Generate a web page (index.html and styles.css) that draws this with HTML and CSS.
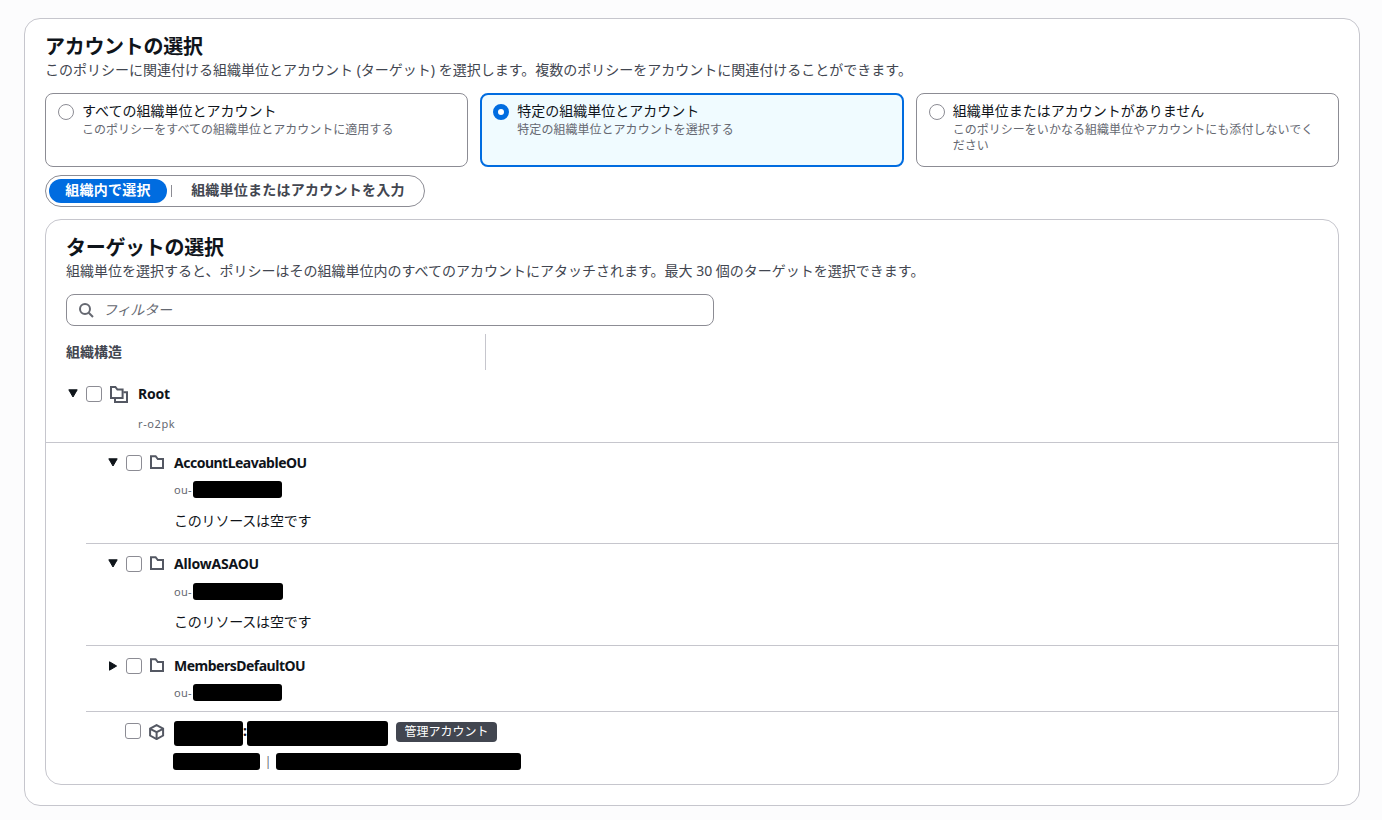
FILE: index.html
```html
<!DOCTYPE html>
<html lang="ja">
<head>
    <meta charset="UTF-8">
    <meta name="viewport" content="width=device-width, initial-scale=1.0">
    <title>アカウントの選択</title>
    <link rel="stylesheet" href="styles.css">
</head>
<body>
    <div class="container">
        <h2>アカウントの選択</h2>
        <p class="description">このポリシーに関連付ける組織単位とアカウント (ターゲット) を選択します。複数のポリシーをアカウントに関連付けることができます。</p>

        <div class="tiles">
            <label class="tile">
                <input type="radio" name="target">
                <span class="tile-text">
                    <span class="tile-label">すべての組織単位とアカウント</span>
                    <span class="tile-description">このポリシーをすべての組織単位とアカウントに適用する</span>
                </span>
            </label>
            <label class="tile selected">
                <input type="radio" name="target" checked>
                <span class="tile-text">
                    <span class="tile-label">特定の組織単位とアカウント</span>
                    <span class="tile-description">特定の組織単位とアカウントを選択する</span>
                </span>
            </label>
            <label class="tile">
                <input type="radio" name="target">
                <span class="tile-text">
                    <span class="tile-label">組織単位またはアカウントがありません</span>
                    <span class="tile-description">このポリシーをいかなる組織単位やアカウントにも添付しないでください</span>
                </span>
            </label>
        </div>

        <div class="segments">
            <button class="segment active">組織内で選択</button>
            <span class="segment-divider"></span>
            <button class="segment">組織単位またはアカウントを入力</button>
        </div>

        <div class="targets">
            <div class="targets-header">
                <h2>ターゲットの選択</h2>
                <p class="description">組織単位を選択すると、ポリシーはその組織単位内のすべてのアカウントにアタッチされます。最大 30 個のターゲットを選択できます。</p>
                <div class="filter">
                    <svg width="16" height="16" viewBox="0 0 16 16"><circle cx="7" cy="7" r="5"/><path d="M10.7 10.7 15 15"/></svg>
                    <input type="text" placeholder="フィルター">
                </div>
            </div>
            <div class="column-header">組織構造</div>

            <div class="node root">
                <div class="node-line">
                    <svg class="toggle" width="10" height="9" viewBox="0 0 10 9"><path d="M0.8 0.8h8.4L5 8z"/></svg>
                    <input type="checkbox">
                    <svg class="icon" width="20" height="18" viewBox="0 0 20 18"><path d="M1 2h4.4l2 2.6h5.2V13H1z"/><path d="M13.4 7.2H17V17H5V13.6"/></svg>
                    <span class="node-name">Root</span>
                </div>
                <div class="node-id">r-o2pk</div>
            </div>

            <div class="children">
                <div class="node">
                    <div class="node-line">
                        <svg class="toggle" width="10" height="9" viewBox="0 0 10 9"><path d="M0.8 0.8h8.4L5 8z"/></svg>
                        <input type="checkbox">
                        <svg class="icon" width="16" height="16" viewBox="0 0 16 16"><path d="M1 1.2h4.6l2.2 2.8H13V13H1z"/></svg>
                        <span class="node-name long">AccountLeavableOU</span>
                    </div>
                    <div class="node-id">ou-<span class="mask mask-ou"></span></div>
                    <div class="node-empty">このリソースは空です</div>
                </div>
                <div class="node wide">
                    <div class="node-line">
                        <svg class="toggle" width="10" height="9" viewBox="0 0 10 9"><path d="M0.8 0.8h8.4L5 8z"/></svg>
                        <input type="checkbox">
                        <svg class="icon" width="16" height="16" viewBox="0 0 16 16"><path d="M1 1.2h4.6l2.2 2.8H13V13H1z"/></svg>
                        <span class="node-name">AllowASAOU</span>
                    </div>
                    <div class="node-id">ou-<span class="mask mask-ou"></span></div>
                    <div class="node-empty">このリソースは空です</div>
                </div>
                <div class="node closed">
                    <div class="node-line">
                        <svg class="toggle" width="10" height="10" viewBox="0 0 10 10"><path d="M1.5 0.8v8.4L8.6 5z"/></svg>
                        <input type="checkbox">
                        <svg class="icon" width="16" height="16" viewBox="0 0 16 16"><path d="M1 1.2h4.6l2.2 2.8H13V13H1z"/></svg>
                        <span class="node-name long">MembersDefaultOU</span>
                    </div>
                    <div class="node-id">ou-<span class="mask mask-ou"></span></div>
                </div>
                <div class="account">
                    <div class="account-line">
                        <input type="checkbox">
                        <svg class="icon" width="16" height="16" viewBox="0 0 16 16"><path d="M7.6 1.1l6.5 3.5v6.9l-6.5 3.6-6.5-3.6V4.6z"/><path d="M1.1 4.8l6.5 3.3 6.5-3.3M7.6 8.1v7"/></svg>
                        <span class="account-name"><span class="mask mask-name"></span><span class="colon">:</span><span class="mask mask-label"></span></span>
                        <span class="badge">管理アカウント</span>
                    </div>
                    <div class="account-info"><span class="mask mask-id"></span><span class="bar">|</span><span class="mask mask-mail"></span></div>
                </div>
            </div>
        </div>
    </div>
</body>
</html>
```

FILE: styles.css
```css
* { box-sizing: border-box; }
body { font-family: "Noto Sans", "Noto Sans CJK JP", sans-serif; font-size: 14px; line-height: 20px; color: #0f141a; background-color: #fcfcfd; margin: 0; padding: 18px 22px 14px 24px; }
h2 { font-size: 20px; line-height: 24px; font-weight: 700; letter-spacing: -0.3px; margin: 0; }
.container { height: 788px; padding: 16px 20px 0; border: 1px solid #c6c6cd; border-radius: 16px; background-color: white; }
.description { margin: 1px 0 0; color: #424650; white-space: nowrap; }

input[type="radio"], input[type="checkbox"] { appearance: none; flex: none; width: 16px; height: 16px; margin: 0; border: 1px solid #8c8c94; border-radius: 50%; background-color: white; }
input[type="radio"]:checked { border: 5px solid #006ce0; }
input[type="checkbox"] { border-radius: 3px; }

.tiles { display: grid; grid-template-columns: repeat(3, 1fr); gap: 12px; margin-top: 13px; }
.tile { display: flex; gap: 8px; height: 74px; padding: 8px 12px; border: 1px solid #8c8c94; border-radius: 8px; }
.tile.selected { padding: 7px 11px; border: 2px solid #006ce0; background-color: #f0fbff; }
.tile input { margin-top: 2px; }
.tile-text { display: flex; flex-direction: column; padding-right: 6px; }
.tile-label { line-height: 18px; }
.tile-description { margin-top: 2px; font-size: 12px; line-height: 16px; letter-spacing: 0.03px; color: #656871; }

.segments { display: flex; align-items: center; width: 380px; height: 32px; margin-top: 8px; padding: 0 3px; border: 1px solid #8c8c94; border-radius: 16px; }
.segment { height: 24px; padding: 0 0 2px; border: none; border-radius: 12px; background: none; font: inherit; font-weight: 700; color: #424650; flex: 1; letter-spacing: 0.25px; }
.segment:last-child { padding-left: 3px; }
.segment.active { flex: 0 0 118px; background-color: #006ce0; color: white; }
.segment-divider { width: 1px; height: 12px; margin-left: 4px; background-color: #8c8c94; }

.targets { height: 566px; margin-top: 12px; border: 1px solid #c6c6cd; border-radius: 16px; }
.targets-header { padding: 16px 20px 0; }
.filter { display: flex; align-items: center; gap: 9px; width: 648px; height: 32px; margin-top: 13px; padding: 0 11px; border: 1px solid #8c8c94; border-radius: 8px; }
.filter svg { fill: none; stroke: #656871; stroke-width: 2; }
.filter input { flex: 1; padding: 0; border: none; outline: none; font: inherit; background: none; }
.filter input::placeholder { font-style: italic; color: #656871; letter-spacing: -0.2px; }
.column-header { width: 420px; height: 36px; margin: 8px 0 0 20px; border-right: 1px solid #c6c6cd; line-height: 36px; font-weight: 700; color: #424650; }

.node-line { display: flex; align-items: center; height: 20px; gap: 8px; }
.node-name { font-weight: 700; letter-spacing: -0.2px; }
.node-name.long { letter-spacing: -0.5px; }
.toggle { flex: none; fill: #0f141a; margin-top: -1px; stroke: #0f141a; stroke-linejoin: round; }
.icon { flex: none; fill: none; stroke: #545863; stroke-width: 2; }
.node-id { display: flex; align-items: center; font-size: 11px; letter-spacing: 0.3px; color: #656871; }
.mask { display: block; border-radius: 3px; background-color: black; }
.root { height: 73px; padding: 14px 0 0 22px; border-bottom: 1px solid #c6c6cd; }
.root .node-id { margin: 10px 0 0 70px; letter-spacing: 0.6px; }
.children { margin-left: 40px; }
.children .node { height: 101px; padding: 10px 0 0 22px; border-bottom: 1px solid #c6c6cd; }
.children .node.wide { height: 102px; }
.children .node.closed { height: 66px; }
.children .node-id { height: 17px; margin: 8px 0 0 66px; }
.mask-ou { width: 89px; height: 17px; margin-left: 1px; }
.node.wide .node-id { margin-top: 9px; }
.node.wide .mask-ou { width: 90px; }
.node-empty { margin: 13px 0 0 66px; letter-spacing: -0.2px; }
.node.wide .node-empty { margin-top: 12px; }
.account { padding: 9px 0 0 39px; }
.account-line { display: flex; height: 25px; }
.account-line .icon { margin: 3px 9px 0 8px; }
.account-line input { margin-top: 2px; }
.account-name { display: flex; }
.colon { width: 4px; line-height: 20px; font-weight: 700; }
.mask-name { width: 69px; height: 25px; }
.mask-label { width: 141px; height: 25px; }
.badge { width: 101px; height: 20px; margin: 1px 0 0 8px; border-radius: 4px; background-color: #424650; color: white; font-size: 12px; line-height: 19px; text-align: center; }
.account-info { display: flex; align-items: center; height: 17px; margin: 7px 0 0 48px; font-size: 12px; color: #656871; }
.bar { width: 16px; text-align: center; }
.mask-id { width: 87px; height: 17px; }
.mask-mail { width: 245px; height: 17px; }
```
